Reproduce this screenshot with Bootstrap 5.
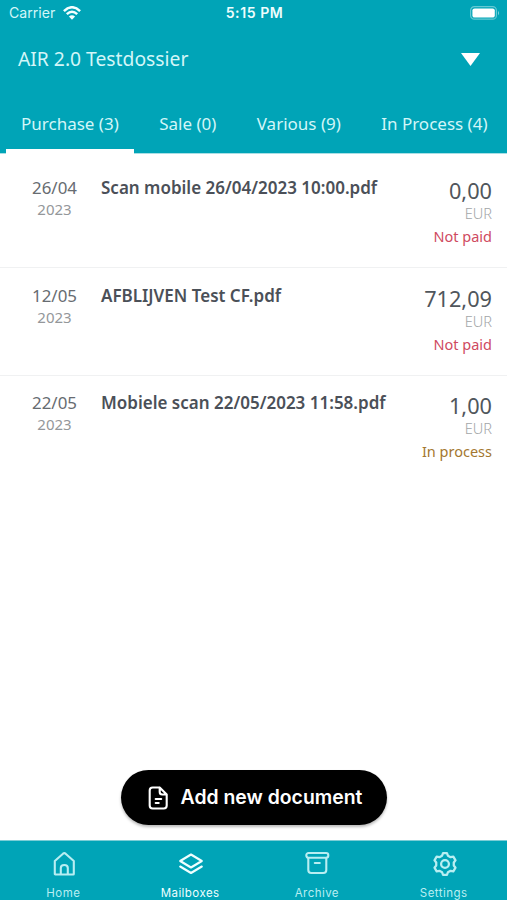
<!DOCTYPE html>
<html lang="en">
<head>
<meta charset="utf-8">
<meta name="viewport" content="width=device-width, initial-scale=1">
<title>Mailboxes</title>
<link href="https://cdn.jsdelivr.net/npm/bootstrap@5.3.0/dist/css/bootstrap.min.css" rel="stylesheet">
<style>
:root{--teal:#00a4b7;--soft:#d3f6f8}
body{font-family:"Noto Sans","Open Sans",sans-serif;color:#495057}
svg{display:block;flex:none}
.screen{height:900px;overflow:hidden}
.teal{background:var(--teal);color:var(--soft)}
.inter{font-family:Inter,"Liberation Sans",sans-serif}
.status{height:28px;padding:0 7px 2px 9px;font-size:14.1px;line-height:26px}
.status>*{flex:1 1 0}
.clock{font-weight:600;letter-spacing:.55px;color:#eefdfd}
.dossier{height:62px;padding:0 27px 0 18px;font-size:19.3px;line-height:62px}
.tabs{height:64px;padding-left:6px;font-size:17px;line-height:68px;border-bottom:1px solid #a9dfe5}
.tabs a{height:64px;padding:0 15px;margin-right:10.4px;color:var(--soft);text-decoration:none;white-space:nowrap}
.tabs a.active{border-bottom:5px solid #fff}
.doc{height:107.5px;padding:10px 15px 0 24px;border-bottom:1px solid #f0f1f2}
.doc:first-child{height:114px;padding-top:16.5px}
.doc:last-child{border:0}
.date{width:61px;margin-right:16px;font-size:16.9px;line-height:22px;padding-top:6.5px;color:#676c71}
.year{font-size:15px;line-height:20.6px;color:#94979a}
.docname{font-size:17px;line-height:22px;padding-top:6.5px;font-weight:600;color:#4b5058;white-space:nowrap}
.amount{font-size:21.7px;line-height:28px;padding-top:6.500px;color:#50565c}
.cur{font-size:14.6px;line-height:16px;font-weight:300;color:#a2a5a8}
.state{font-size:14.5px;line-height:20px;padding-top:5px}
.unpaid{color:#cf4a60}
.inproc{color:#a47730}
.add{width:266px;height:55px;margin-bottom:15px;background:#000;color:#fff;font-size:19.4px;font-weight:600;border:0;box-shadow:0 2px 3px rgba(0,0,0,.28)}
.add span{padding-top:1px}
.bottom{height:60px;font-size:11.5px;letter-spacing:.45px;border-top:1px solid #7bcdd6}
.bottom a{color:#b8eef2;text-decoration:none;padding-top:10px;line-height:14px}
.bottom svg{margin:0 0 9px 2px}
.bottom a.active{color:#f0ffff}
.line{fill:none;stroke:currentColor;stroke-width:2.1;stroke-linecap:round;stroke-linejoin:round}
</style>
<script src="https://cdn.jsdelivr.net/npm/bootstrap@5.3.0/dist/js/bootstrap.bundle.min.js"></script>
</head>
<body class="bg-white">
<div class="screen d-flex flex-column">
  <header class="teal">
    <div class="status inter d-flex align-items-center">
      <div class="d-flex align-items-center"><span class="me-1 pe-1">Carrier</span>
        <svg width="18" height="14" viewBox="0 0 18 14" fill="none" stroke="#f4ffff" stroke-width="2.500"><path d="M.9 5.100Q9-2.600 17.100 5.100M3.800 8.200Q9 3.300 14.200 8.200"/><path d="M9 13.700 5.900 10.600Q9 7.900 12.100 10.600Z" fill="#f4ffff" stroke="none"/></svg>
      </div>
      <div class="clock text-center">5:15 PM</div>
      <div class="d-flex justify-content-end"><svg width="30" height="14" viewBox="0 0 30 14"><rect x=".6" y=".6" width="25.800" height="12.600" rx="3.800" fill="none" stroke="#65c9d4" stroke-width="1.200"/><rect x="2.400" y="2.400" width="22.400" height="9.200" rx="2.200" fill="#fff"/><path d="M28 4.700q2 2.300 0 4.600z" fill="#80d3dc"/></svg></div>
    </div>
    <div class="dossier d-flex align-items-center justify-content-between">
      <span>AIR 2.0 Testdossier</span>
      <svg width="19" height="13" viewBox="0 0 19 13"><path d="M0 0h19L9.500 13z" fill="#fff"/></svg>
    </div>
    <nav class="tabs d-flex">
      <a class="active" href="#">Purchase (3)</a><a href="#">Sale (0)</a><a href="#">Various (9)</a><a href="#">In Process (4)</a>
    </nav>
  </header>
  <main class="flex-grow-1">
    <div class="doc d-flex">
      <div class="date text-center"><div>26/04</div><div class="year">2023</div></div>
      <div class="docname flex-grow-1">Scan mobile 26/04/2023 10:00.pdf</div>
      <div class="text-end"><div class="amount">0,00</div><div class="cur">EUR</div><div class="state unpaid">Not paid</div></div>
    </div>
    <div class="doc d-flex">
      <div class="date text-center"><div>12/05</div><div class="year">2023</div></div>
      <div class="docname flex-grow-1">AFBLIJVEN Test CF.pdf</div>
      <div class="text-end"><div class="amount">712,09</div><div class="cur">EUR</div><div class="state unpaid">Not paid</div></div>
    </div>
    <div class="doc d-flex">
      <div class="date text-center"><div>22/05</div><div class="year">2023</div></div>
      <div class="docname flex-grow-1">Mobiele scan 22/05/2023 11:58.pdf</div>
      <div class="text-end"><div class="amount">1,00</div><div class="cur">EUR</div><div class="state inproc">In process</div></div>
    </div>
  </main>
  <button class="add inter btn rounded-pill align-self-center d-flex align-items-center justify-content-center p-0">
    <svg class="line me-2" width="28" height="28" viewBox="0.8 0 28 28"><path d="M15 3.500H8.500Q5.500 3.500 5.500 6.500V21.500Q5.500 24.500 8.500 24.500H19.500Q22.500 24.500 22.500 21.500V10.500L15.500 3.500V8Q15.500 10.500 18 10.500H22M11.500 15H17M11.500 19H14.500"/></svg>
    <span>Add new document</span>
  </button>
  <nav class="bottom teal inter row g-0">
    <a class="col d-flex flex-column align-items-center" href="#"><svg class="line" width="26" height="26" viewBox="-.3 0 26 26"><path d="M3.500 23V10L11.700 2.700Q13 1.700 14.300 2.700L22.500 10V23Q22.500 23.500 22 23.500H4Q3.500 23.500 3.500 23ZM9.500 23V17Q9.500 14 13 14T16.500 17V23"/></svg>Home</a>
    <a class="active col d-flex flex-column align-items-center" href="#"><svg class="line" width="26" height="26" viewBox="0 0 26 26"><path d="M13 3.500 23.800 10 13 16.500 2.200 10ZM2.200 15.500 13 22 23.800 15.500"/></svg>Mailboxes</a>
    <a class="col d-flex flex-column align-items-center" href="#"><svg class="line" width="26" height="26" viewBox=".7 .5 26 26"><rect x="2" y="2.500" width="22" height="4.800" rx="2.200"/><path d="M4 7.500V19.500Q4 22.500 7 22.500H19Q22 22.500 22 19.500V7.500M10.500 12.500H15.500"/></svg>Archive</a>
    <a class="col d-flex flex-column align-items-center" href="#"><svg class="line" width="26" height="26" viewBox="0 0 24 24"><path d="M9.330 4.300 10.200 2H13.800L14.670 4.300 17.200 5.700 19.700 5.250 21.700 8.600 20.100 10.640V13.360L21.700 15.400 19.700 18.750 17.200 18.300 14.670 19.700 13.800 22H10.200L9.330 19.700 6.800 18.300 4.300 18.750 2.300 15.400 3.900 13.360V10.640L2.300 8.600 4.300 5.250 6.800 5.700Z"/><circle cx="12" cy="12" r="3.600"/></svg>Settings</a>
  </nav>
</div>
</body>
</html>
